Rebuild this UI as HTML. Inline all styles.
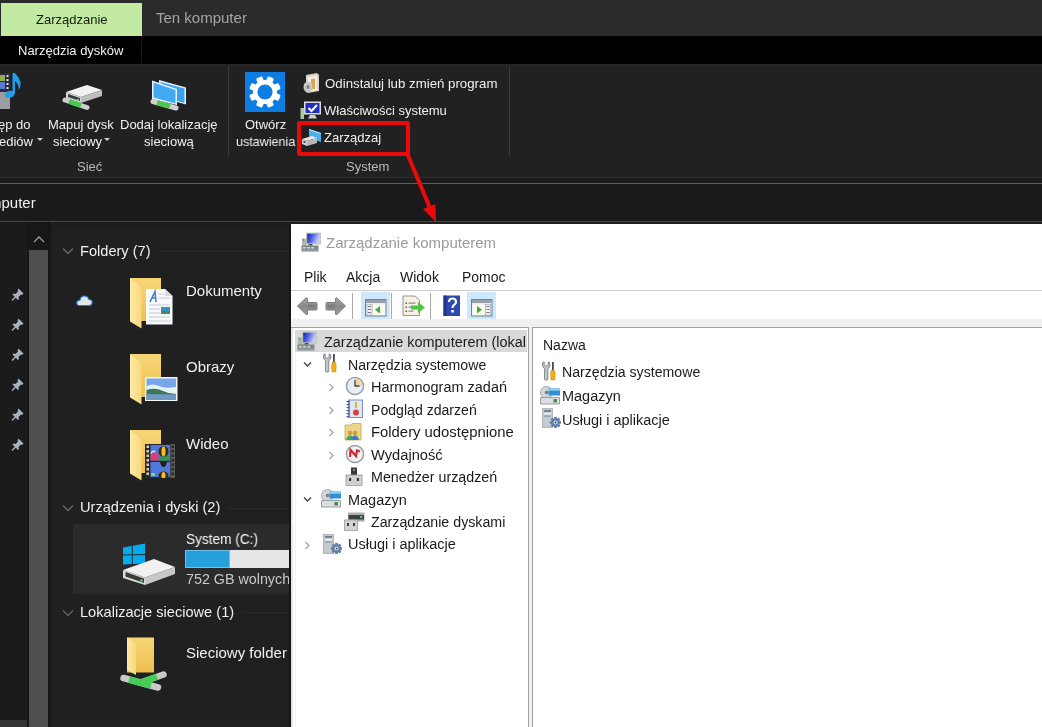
<!DOCTYPE html>
<html><head><meta charset="utf-8">
<style>
*{margin:0;padding:0;box-sizing:border-box}
html,body{width:1042px;height:727px;overflow:hidden;background:#202020;font-family:"Liberation Sans",sans-serif;position:relative}
.a{position:absolute}
.t{position:absolute;will-change:transform;white-space:nowrap;line-height:1}
</style></head><body>
<!-- tab bar -->
<div class="a" style="left:0;top:0;width:1042px;height:36px;background:#2b2b2b"></div>
<div class="a" style="left:1px;top:3px;width:141px;height:33px;background:#c3eaa2"></div>
<div class="t" style="left:36px;top:13px;font-size:13px;color:#121a0e">Zarządzanie</div>
<div class="t" style="left:156px;top:10px;font-size:15px;color:#a6a6a6">Ten komputer</div>
<!-- black band -->
<div class="a" style="left:0;top:36px;width:1042px;height:28px;background:#000"></div>
<div class="a" style="left:141px;top:36px;width:1px;height:27px;background:#1a1a1a"></div>
<div class="t" style="left:18px;top:44px;font-size:13px;color:#f2f2f2">Narzędzia dysków</div>
<!-- ribbon -->
<div class="a" style="left:0;top:64px;width:1042px;height:113px;background:#212121"></div><div class="a" style="left:0;top:64px;width:1042px;height:1px;background:#262626"></div>
<div class="a" style="left:228px;top:66px;width:1px;height:90px;background:#3a3a3a"></div>
<div class="a" style="left:509px;top:66px;width:1px;height:90px;background:#3a3a3a"></div>
<div class="a" style="left:0;top:177px;width:1042px;height:1px;background:#2c2c2c"></div>
<div class="a" style="left:0;top:178px;width:1042px;height:5px;background:#1b1b1b"></div>
<div class="a" style="left:0;top:183px;width:1042px;height:1px;background:#5c5c5c"></div>
<!-- ribbon texts -->
<div class="t" style="left:-2px;top:118px;font-size:13px;color:#f0f0f0">ęp do</div>
<div class="t" style="left:-1px;top:134.5px;font-size:13px;color:#f0f0f0">ediów</div>
<div class="a" style="left:37px;top:137.5px;width:0;height:0;border-left:3.5px solid transparent;border-right:3.5px solid transparent;border-top:3.5px solid #d0d0d0"></div>
<div class="t" style="left:48px;top:118px;font-size:13px;color:#f0f0f0">Mapuj dysk</div>
<div class="t" style="left:53px;top:134.5px;font-size:13px;color:#f0f0f0">sieciowy</div>
<div class="a" style="left:104px;top:137.5px;width:0;height:0;border-left:3.5px solid transparent;border-right:3.5px solid transparent;border-top:3.5px solid #d0d0d0"></div>
<div class="t" style="left:120px;top:118px;font-size:13px;color:#f0f0f0">Dodaj lokalizację</div>
<div class="t" style="left:144px;top:134.5px;font-size:13px;color:#f0f0f0">sieciową</div>
<div class="t" style="left:77px;top:160px;font-size:13px;color:#bababa">Sieć</div>
<div class="t" style="left:245px;top:118px;font-size:13px;color:#f0f0f0">Otwórz</div>
<div class="t" style="left:235.5px;top:134.5px;font-size:13px;color:#f0f0f0;transform:scaleX(0.965);transform-origin:0 0">ustawienia</div>
<div class="t" style="left:325px;top:77px;font-size:13px;color:#f0f0f0;transform:scaleX(1.02);transform-origin:0 0">Odinstaluj lub zmień program</div>
<div class="t" style="left:324px;top:104px;font-size:13px;color:#f0f0f0">Właściwości systemu</div>
<div class="t" style="left:324px;top:131px;font-size:13px;color:#f0f0f0">Zarządzaj</div>
<div class="t" style="left:346px;top:160px;font-size:13px;color:#bababa">System</div>
<!-- ribbon icons -->
<svg class="a" style="left:0;top:68px" width="30" height="44" viewBox="0 0 30 44">
 <rect x="-4" y="22" width="14" height="19" fill="#9c9ea6"/>
 <rect x="-4" y="5" width="14" height="19" fill="#2a2a40"/>
 <rect x="-3" y="7" width="8" height="6" fill="#8fb24a"/>
 <rect x="-3" y="14" width="8" height="7" fill="#5a7ad0"/>
 <rect x="6.5" y="7" width="2" height="2" fill="#e0e0e0"/><rect x="6.5" y="11" width="2" height="2" fill="#e0e0e0"/><rect x="6.5" y="15" width="2" height="2" fill="#e0e0e0"/><rect x="6.5" y="19" width="2" height="2" fill="#e0e0e0"/>
 <path d="M12.5 5 L15 5 Q19 9 20.5 14 Q21 19 18.5 22 Q19.5 17 15 13 L15 25 Q14 30 8 30 Q4 29 5 26 Q7 22 12.5 23 Z" fill="#1f9de6"/>
</svg>
<svg class="a" style="left:60px;top:82px" width="46" height="30" viewBox="0 0 46 30">
 <polygon points="6,10 27,3 42,8 21,15" fill="#f2f2f2"/>
 <polygon points="6,10 21,15 21,21 6,16" fill="#d6d6d6"/>
 <polygon points="21,15 42,8 42,14 21,21" fill="#bdbdbd"/>
 <polygon points="8,12 20,16 20,19 8,15" fill="#3a3a3a"/>
 <circle cx="18" cy="17.5" r="1" fill="#5bd06a"/>
 <line x1="5" y1="18" x2="27" y2="25.5" stroke="#cfcfcf" stroke-width="5" stroke-linecap="round"/>
 <line x1="9" y1="19.4" x2="21" y2="23.5" stroke="#47c94f" stroke-width="5"/>
</svg>
<svg class="a" style="left:148px;top:77px" width="42" height="35" viewBox="0 0 42 35">
 <polygon points="11,3 38,10.5 38,27.5 11,20" fill="#e8f4ff"/>
 <polygon points="12.5,5 36.5,11.5 36.5,26 12.5,19.5" fill="#3aa3ef"/>
 <polygon points="4,3.5 29,12 29,28 4,22" fill="#e8f4ff"/>
 <polygon points="5.5,5.5 27.5,13 27.5,26.5 5.5,20.5" fill="#43aaf2"/>
 <line x1="5" y1="24.5" x2="28" y2="31" stroke="#d8cfd2" stroke-width="5" stroke-linecap="round"/>
 <line x1="9" y1="25.6" x2="22" y2="29.3" stroke="#49c950" stroke-width="5"/>
</svg>
<div class="a" style="left:245px;top:72px;width:40px;height:40px;background:#0d7de3"></div>
<svg class="a" style="left:245px;top:72px" width="40" height="40" viewBox="0 0 40 40">
 <g transform="translate(20,20)" fill="#fff">
  <circle r="12"/><rect x="-3.3" y="-15.8" width="6.6" height="8" rx="1.5" transform="rotate(22.5)"/><rect x="-3.3" y="-15.8" width="6.6" height="8" rx="1.5" transform="rotate(67.5)"/><rect x="-3.3" y="-15.8" width="6.6" height="8" rx="1.5" transform="rotate(112.5)"/><rect x="-3.3" y="-15.8" width="6.6" height="8" rx="1.5" transform="rotate(157.5)"/><rect x="-3.3" y="-15.8" width="6.6" height="8" rx="1.5" transform="rotate(202.5)"/><rect x="-3.3" y="-15.8" width="6.6" height="8" rx="1.5" transform="rotate(247.5)"/><rect x="-3.3" y="-15.8" width="6.6" height="8" rx="1.5" transform="rotate(292.5)"/><rect x="-3.3" y="-15.8" width="6.6" height="8" rx="1.5" transform="rotate(337.5)"/>
  <circle r="7.6" fill="#0d7de3"/>
 </g>
</svg>
<svg class="a" style="left:300px;top:72px" width="22" height="22" viewBox="0 0 22 22">
 <polygon points="6,3 17,1 19,3 19,19 8,21 6,19" fill="#d9d4cc"/>
 <polygon points="8,5 17,3.5 17,18 8,19.5" fill="#f4f0e8"/>
 <polygon points="11,7 15,6.5 15,17 11,17.5" fill="#e0a44a"/>
 <ellipse cx="8" cy="15" rx="4.5" ry="5.5" fill="#c8c8c8"/>
 <ellipse cx="8" cy="15" rx="1.5" ry="2" fill="#808080"/>
</svg>
<svg class="a" style="left:299px;top:100px" width="24" height="21" viewBox="0 0 24 21">
 <rect x="1.5" y="8" width="3.5" height="11" fill="#a9c9a0"/>
 <rect x="5" y="1.5" width="17" height="13" fill="#dcdcdc"/>
 <rect x="6.5" y="3" width="14" height="10" fill="#1f2fc2"/>
 <path d="M9.5 8 L12.5 11 L18 5" fill="none" stroke="#fff" stroke-width="2"/>
 <polygon points="11,15 16,15 18,18.5 9,18.5" fill="#d0d0d0"/>
</svg>
<svg class="a" style="left:300px;top:127px" width="24" height="20" viewBox="0 0 24 20">
 <polygon points="9,2 21,6 21,15 9,11" fill="#4ab0f0"/>
 <polygon points="9,2 21,6 21,7 9,3" fill="#cfe8fa"/>
 <polygon points="2,12 12,9 17,11 7,14" fill="#e6e6e6"/>
 <polygon points="2,12 7,14 7,19 2,17" fill="#cfcfcf"/>
 <polygon points="7,14 17,11 17,16 7,19" fill="#b8b8b8"/>
 <rect x="3.5" y="14" width="2" height="2" fill="#555"/>
</svg>
<!-- address bar -->
<div class="a" style="left:0;top:184px;width:1042px;height:37px;background:#1a1a1a"></div>
<div class="a" style="left:0;top:220.5px;width:1042px;height:1.5px;background:#484848"></div>
<div class="t" style="left:-11px;top:195px;font-size:15px;color:#f0f0f0">mputer</div>
<!-- nav pane -->
<div class="a" style="left:0;top:222px;width:27px;height:505px;background:#1b1b1b"></div>
<div class="a" style="left:0;top:720px;width:27px;height:7px;background:#333"></div>
<div class="a" style="left:27px;top:222px;width:21px;height:505px;background:#171717"></div>
<div class="a" style="left:29px;top:250px;width:19px;height:477px;background:#4f4f4f"></div>
<div class="a" style="left:48px;top:222px;width:3px;height:505px;background:#151515"></div>
<div class="a" style="left:51px;top:224px;width:2px;height:503px;background:#1d1d1d"></div>
<div class="a" style="left:53px;top:222px;width:240px;height:7px;background:#1c1c1c"></div>
<!-- content -->
<svg class="a" style="left:62px;top:247px" width="12" height="8"><path d="M1 1.5 L6 6.5 L11 1.5" fill="none" stroke="#646464" stroke-width="1.4"/></svg>
<div class="t" style="left:80px;top:244px;font-size:14.6px;color:#f0f0f0">Foldery (7)</div>
<div class="a" style="left:160px;top:251px;width:130px;height:1px;background:#2a2a2a"></div>
<div class="t" style="left:186px;top:283px;font-size:15px;color:#f0f0f0">Dokumenty</div>
<div class="t" style="left:186px;top:359px;font-size:15px;color:#f0f0f0">Obrazy</div>
<div class="t" style="left:186px;top:435.5px;font-size:15px;color:#f0f0f0">Wideo</div>
<svg class="a" style="left:62px;top:504px" width="12" height="8"><path d="M1 1.5 L6 6.5 L11 1.5" fill="none" stroke="#646464" stroke-width="1.4"/></svg>
<div class="t" style="left:80px;top:500px;font-size:14.6px;color:#f0f0f0">Urządzenia i dyski (2)</div>
<div class="a" style="left:228px;top:508px;width:62px;height:1px;background:#2a2a2a"></div>
<div class="a" style="left:73px;top:524px;width:217px;height:70px;background:#2b2b2b"></div>
<div class="t" style="left:186px;top:532px;font-size:14px;color:#fafafa;transform:scaleX(0.975);transform-origin:0 0">System (C:)</div>
<div class="a" style="left:185px;top:550px;width:105px;height:18px;background:#e6e6e6"></div>
<div class="a" style="left:185px;top:550px;width:44.5px;height:18px;background:#26a0da;border:1px solid #6fc0ea"></div>
<div class="t" style="left:186px;top:572.3px;font-size:14.3px;color:#c9c9c9">752 GB wolnych</div>
<svg class="a" style="left:62px;top:609px" width="12" height="8"><path d="M1 1.5 L6 6.5 L11 1.5" fill="none" stroke="#646464" stroke-width="1.4"/></svg>
<div class="t" style="left:80px;top:605px;font-size:14.6px;color:#f0f0f0">Lokalizacje sieciowe (1)</div>
<div class="a" style="left:243px;top:612px;width:47px;height:1px;background:#2a2a2a"></div>
<div class="t" style="left:186px;top:645px;font-size:15px;color:#f0f0f0">Sieciowy folder</div>
<!-- content icons -->
<svg class="a" style="left:11px;top:287px" width="14" height="170" viewBox="0 0 14 170">
 <g id="pin"><path d="M7.5 1.5 L12.5 6.5 L11 8 L10 7.5 L7.5 10 L8 12 L7 13 L1.5 7.5 L2.5 6.5 L4.5 7 L7 4.5 L6.5 3.5 Z" fill="#a9b1bb"/><line x1="4.5" y1="10" x2="1" y2="13.5" stroke="#a9b1bb" stroke-width="1.5"/></g>
 <use href="#pin" y="30"/><use href="#pin" y="60"/><use href="#pin" y="90"/><use href="#pin" y="120"/><use href="#pin" y="150"/>
</svg>
<svg class="a" style="left:32px;top:234px" width="14" height="10" viewBox="0 0 14 10"><path d="M2 8 L7 3 L12 8" fill="none" stroke="#9a9a9a" stroke-width="1.3"/></svg>
<svg class="a" style="left:76px;top:294px" width="17" height="13" viewBox="0 0 17 13">
 <path d="M3.5 11.5 Q0.5 11.5 0.8 8.5 Q1.2 6 4 6.2 Q4.5 2 8.5 2 Q12 2 12.8 5.5 Q16.2 5.5 16.2 8.6 Q16 11.5 13 11.5 Z" fill="#e4e6ea" stroke="#2a78d0" stroke-width="1.1"/>
</svg>
<svg width="0" height="0" style="position:absolute">
 <defs>
  <linearGradient id="fb" x1="0" y1="0" x2="0" y2="1"><stop offset="0" stop-color="#f7d677"/><stop offset="1" stop-color="#eebf4f"/></linearGradient>
  <linearGradient id="ff" x1="0" y1="0" x2="1" y2="0"><stop offset="0" stop-color="#fde9a6"/><stop offset="1" stop-color="#f8d97d"/></linearGradient>
  <symbol id="fold" viewBox="0 0 32 51"><rect x="0" y="0" width="31" height="43" fill="url(#fb)"/><polygon points="0,0 11.5,9 11.5,50.5 0,43.5" fill="url(#ff)"/></symbol>
 </defs>
</svg>
<svg class="a" style="left:130px;top:278px" width="32" height="51"><use href="#fold"/></svg>
<svg class="a" style="left:146px;top:289px" width="27" height="36" viewBox="0 0 27 36">
 <polygon points="0,0 19,0 26.5,7 26.5,35.5 0,35.5" fill="#f8f9fb"/>
 <polygon points="19,0 26.5,7 19,7" fill="#d9dde3"/>
 <path d="M4 13 L9 2.5 L10 13 M6 9 L10 9" fill="none" stroke="#3d7fd0" stroke-width="1.6"/>
 <g stroke="#c5ccd6" stroke-width="1"><line x1="12" y1="5" x2="18" y2="5"/><line x1="12" y1="9" x2="24" y2="9"/><line x1="3" y1="16" x2="24" y2="16"/><line x1="3" y1="20" x2="14" y2="20"/><line x1="3" y1="24" x2="14" y2="24"/><line x1="3" y1="28" x2="24" y2="28"/><line x1="3" y1="32" x2="24" y2="32"/></g>
 <rect x="15" y="18" width="9" height="7" fill="#3c8fc4"/><rect x="15" y="22" width="9" height="3" fill="#4d8a63"/>
</svg>
<svg class="a" style="left:130px;top:354px" width="32" height="51"><use href="#fold"/></svg>
<svg class="a" style="left:145px;top:376.5px" width="32.5" height="24.5" viewBox="0 0 32.5 24.5">
 <rect x="0" y="0" width="32.5" height="24.5" fill="#f3f6f9"/>
 <rect x="1.5" y="1.5" width="29.5" height="21.5" fill="#78a6ea"/>
 <path d="M1.5 9 Q8 6 14 9 Q20 12 31 10 L31 23 L1.5 23 Z" fill="#e4f2f6"/>
 <path d="M1.5 13 Q10 10 18 14 Q24 17 31 17 L31 23 L1.5 23 Z" fill="#3d7658"/>
 <path d="M1.5 17 L31 17.5 L31 23 L1.5 23 Z" fill="#7098c4"/>
</svg>
<svg class="a" style="left:130px;top:430px" width="32" height="51"><use href="#fold"/></svg>
<svg class="a" style="left:144.5px;top:443.5px" width="30" height="34" viewBox="0 0 30 34">
 <rect x="0" y="0" width="30" height="34" fill="#2a2a2a"/>
 <rect x="25.5" y="0" width="4.5" height="34" fill="#5a5a5a"/>
 <g fill="#d8d0b0"><rect x="1.5" y="1.5" width="2.5" height="2.5"/><rect x="1.5" y="6" width="2.5" height="2.5"/><rect x="1.5" y="10.5" width="2.5" height="2.5"/><rect x="1.5" y="15" width="2.5" height="2.5"/><rect x="1.5" y="19.5" width="2.5" height="2.5"/><rect x="1.5" y="24" width="2.5" height="2.5"/><rect x="1.5" y="28.5" width="2.5" height="2.5"/></g>
 <g fill="#2a2a2a"><rect x="26.5" y="1.5" width="2.5" height="2.5"/><rect x="26.5" y="6" width="2.5" height="2.5"/><rect x="26.5" y="10.5" width="2.5" height="2.5"/><rect x="26.5" y="15" width="2.5" height="2.5"/><rect x="26.5" y="19.5" width="2.5" height="2.5"/><rect x="26.5" y="24" width="2.5" height="2.5"/><rect x="26.5" y="28.5" width="2.5" height="2.5"/></g>
 <rect x="5.5" y="1" width="19.5" height="15.5" fill="#4c78e0"/>
 <rect x="5.5" y="18" width="19.5" height="15" fill="#4c78e0"/>
 <path d="M5.5 16.5 L5.5 11 Q8 7 10 9 Q12 7 13.5 11 L13.5 16.5 Z" fill="#d8406a"/>
 <path d="M6 9.5 Q8 6 10 8" fill="none" stroke="#e8f0f0" stroke-width="1.5"/>
 <ellipse cx="18.5" cy="7.5" rx="5" ry="5.5" fill="#3a2a10"/>
 <ellipse cx="18.5" cy="7.5" rx="2" ry="5" fill="#f0c020"/>
 <path d="M13.5 16.5 Q16 11 20 12.5 Q24 11 25 14 L25 16.5 Z" fill="#2a9a4a"/>
 <path d="M15 18 L22 18 Q21 23 18.5 23 Q16 23 15 18 Z" fill="#2a1a10"/>
 <ellipse cx="18.5" cy="31.5" rx="5" ry="4" fill="#3a2a10"/>
 <ellipse cx="18.5" cy="31.5" rx="2" ry="3.5" fill="#f0c020"/>
 <rect x="6" y="29" width="4" height="3" fill="#8ad070"/>
</svg>
<svg class="a" style="left:120px;top:542px" width="58" height="45" viewBox="0 0 58 45">
 <polygon points="3,5.5 25,1.5 25,21.5 3,22.5" fill="#00aef0"/>
 <line x1="12.3" y1="3.5" x2="12.3" y2="22.5" stroke="#2b2b2b" stroke-width="1"/>
 <line x1="3" y1="13" x2="25" y2="12.5" stroke="#2b2b2b" stroke-width="1"/>
 <polygon points="3,28 34,17 55,25 25,35.5" fill="#f1f1f1"/>
 <polygon points="3,28 25,35.5 25,43 3,36" fill="#dadada"/>
 <polygon points="25,35.5 55,25 55,32 25,43" fill="#c8c8c8"/>
 <polygon points="5.5,30 24,36.5 24,41 5.5,34.5" fill="#3a3a3a"/>
 <circle cx="21.5" cy="38.5" r="1.2" fill="#62d06e"/>
</svg>
<svg class="a" style="left:115px;top:632px" width="55" height="62" viewBox="0 0 55 62">
 <rect x="12" y="5.5" width="27" height="35" fill="url(#fb)"/>
 <polygon points="12,5.5 21,12 21,43 12,38" fill="url(#ff)"/>
 <line x1="8.5" y1="46" x2="43" y2="55.5" stroke="#c9c9c9" stroke-width="6.5" stroke-linecap="round"/>
 <line x1="26" y1="50.5" x2="48.5" y2="42.5" stroke="#c9c9c9" stroke-width="6.5" stroke-linecap="round"/>
 <line x1="14" y1="47.5" x2="36" y2="53.6" stroke="#45cc55" stroke-width="6.5"/>
 <line x1="27" y1="50" x2="42" y2="44.7" stroke="#45cc55" stroke-width="6.5"/>
</svg>
<!-- dialog -->
<div class="a" style="left:289px;top:224px;width:2px;height:503px;background:#151515"></div>
<div class="a" style="left:291px;top:224px;width:751px;height:503px;background:#fff"></div>
<div class="t" style="left:326px;top:235px;font-size:15px;color:#9a9a9a">Zarządzanie komputerem</div>
<div class="t" style="left:304px;top:270px;font-size:14px;color:#1a1a1a">Plik</div>
<div class="t" style="left:346px;top:270px;font-size:14px;color:#1a1a1a">Akcja</div>
<div class="t" style="left:400px;top:270px;font-size:14px;color:#1a1a1a">Widok</div>
<div class="t" style="left:462px;top:270px;font-size:14px;color:#1a1a1a">Pomoc</div>
<div class="a" style="left:291px;top:290px;width:751px;height:1px;background:#cdcdcd"></div>
<div class="a" style="left:291px;top:319px;width:751px;height:408px;background:#f0f0f0"></div>
<div class="a" style="left:291px;top:327px;width:238px;height:400px;background:#fff;border:1px solid #a0a0a0;border-bottom:0;border-left:0"></div><div class="a" style="left:291px;top:328px;width:1.5px;height:399px;background:#e6e6e6"></div><div class="a" style="left:294.5px;top:352px;width:1px;height:375px;background:#f2f2f2"></div>
<div class="a" style="left:532px;top:327px;width:510px;height:400px;background:#fff;border:1px solid #a0a0a0;border-right:0;border-bottom:0"></div>
<div class="a" style="left:295px;top:330px;width:232px;height:21.5px;background:#d9d9d9"></div>
<div id="tree" style="position:absolute;left:295px;top:328px;width:232px;height:399px;overflow:hidden">
<div class="t" style="left:28.5px;top:7px;font-size:14px;color:#1a1a1a;transform:scaleX(1.0300);transform-origin:0 0">Zarządzanie komputerem (lokalny)</div>
<div class="t" style="left:53px;top:29.5px;font-size:14px;color:#1a1a1a;transform:scaleX(1.0095);transform-origin:0 0">Narzędzia systemowe</div>
<div class="t" style="left:76px;top:52px;font-size:14px;color:#1a1a1a;transform:scaleX(1.0342);transform-origin:0 0">Harmonogram zadań</div>
<div class="t" style="left:76px;top:74.5px;font-size:14px;color:#1a1a1a;transform:scaleX(1.0067);transform-origin:0 0">Podgląd zdarzeń</div>
<div class="t" style="left:76px;top:97px;font-size:14px;color:#1a1a1a;transform:scaleX(1.0601);transform-origin:0 0">Foldery udostępnione</div>
<div class="t" style="left:76px;top:119.5px;font-size:14px;color:#1a1a1a;transform:scaleX(1.0482);transform-origin:0 0">Wydajność</div>
<div class="t" style="left:76px;top:142px;font-size:14px;color:#1a1a1a;transform:scaleX(1.0202);transform-origin:0 0">Menedżer urządzeń</div>
<div class="t" style="left:53px;top:164.5px;font-size:14px;color:#1a1a1a;transform:scaleX(1.0335);transform-origin:0 0">Magazyn</div>
<div class="t" style="left:76px;top:187px;font-size:14px;color:#1a1a1a;transform:scaleX(1.0159);transform-origin:0 0">Zarządzanie dyskami</div>
<div class="t" style="left:53px;top:208.5px;font-size:14px;color:#1a1a1a;transform:scaleX(1.0345);transform-origin:0 0">Usługi i aplikacje</div>
</div>
<div class="t" style="left:542.5px;top:338px;font-size:14px;color:#1a1a1a">Nazwa</div>
<div class="t" style="left:562px;top:364.5px;font-size:14px;color:#1a1a1a;transform:scaleX(1.0095);transform-origin:0 0">Narzędzia systemowe</div>
<div class="t" style="left:562px;top:389px;font-size:14px;color:#1a1a1a;transform:scaleX(1.0335);transform-origin:0 0">Magazyn</div>
<div class="t" style="left:562px;top:412.5px;font-size:14px;color:#1a1a1a;transform:scaleX(1.0345);transform-origin:0 0">Usługi i aplikacje</div>
<!-- dialog icons -->
<svg width="0" height="0" style="position:absolute">
 <defs>
  <symbol id="compmgmt" viewBox="0 0 20 20">
   <linearGradient id="scr" x1="0" y1="0" x2="1" y2="0.3"><stop offset="0" stop-color="#1020c0"/><stop offset="0.45" stop-color="#5060e0"/><stop offset="1" stop-color="#c8d0f8"/></linearGradient>
   <rect x="5" y="0.5" width="15" height="12" fill="#c4c6b8"/>
   <rect x="6.2" y="1.7" width="12.6" height="9.6" fill="url(#scr)"/>
   <rect x="1" y="6.5" width="4.5" height="8" fill="#b0b8a8"/>
   <rect x="2" y="7.5" width="1" height="1" fill="#404040"/>
   <path d="M6 13.5 Q8 11.5 11 12 L12 13.5 Z" fill="#303848"/>
   <rect x="0.5" y="13.5" width="17" height="6" fill="#7c8488"/>
   <g fill="#d0d4d6"><rect x="1.8" y="15" width="3" height="1.6"/><rect x="6" y="15" width="3" height="1.6"/><rect x="10.2" y="15" width="3" height="1.6"/></g>
   <rect x="1" y="17.5" width="16" height="1.3" fill="#9aa2a6"/>
  </symbol>
  <symbol id="tools" viewBox="0 0 16 20">
   <path d="M1.8 1.5 Q0.5 5 2.8 7.2 L3.6 7.8 L3.6 18.5 Q5.2 19.8 6.8 18.5 L6.8 7.8 L7.6 7.2 Q9.8 5 8.5 1.5 L7.2 1 L7.2 4.2 L6 5 L4.4 5 L3.2 4.2 L3.2 1 Z" fill="#c4c8cc" stroke="#6a7078" stroke-width="0.8"/>
   <rect x="11" y="1" width="1.8" height="8.5" fill="#4a4a4a"/>
   <path d="M10.2 9.5 L13.6 9.5 L14.2 12.5 L13.8 19 L10 19 L9.6 12.5 Z" fill="#f2b010" stroke="#b98008" stroke-width="0.5"/>
  </symbol>
  <symbol id="storage" viewBox="0 0 22 20">
   <circle cx="7.5" cy="7.5" r="6.5" fill="#a8acb0"/>
   <circle cx="7.5" cy="7.5" r="5.5" fill="#d4d7da"/>
   <circle cx="7.5" cy="7.5" r="1.8" fill="#7a7e82"/>
   <rect x="9.5" y="3.5" width="11.5" height="7" fill="#2f8fd0"/>
   <rect x="9.5" y="3.5" width="11.5" height="2.2" fill="#8fd0f5"/>
   <rect x="1" y="12" width="20" height="7.5" rx="1.2" fill="#9a9fa4"/>
   <rect x="2" y="13" width="18" height="5.5" rx="0.8" fill="#dcdfe2"/>
   <rect x="14.5" y="14" width="3.5" height="3.5" fill="#4a8a50"/>
  </symbol>
  <symbol id="services" viewBox="0 0 20 20">
   <rect x="1.5" y="0.5" width="10" height="19" fill="#c3cbd0"/>
   <rect x="1.5" y="0.5" width="10" height="19" fill="none" stroke="#9aa4ac" stroke-width="0.7"/>
   <rect x="3" y="2" width="7" height="1.8" fill="#6f7e8c"/>
   <rect x="3" y="5" width="7" height="1.5" fill="#eef2f4"/>
   <rect x="3" y="7.5" width="7" height="1.2" fill="#8a98a4"/>
   <g transform="translate(14.5,14.5)" fill="#5f7ea6"><rect x="-1.3" y="-5.6" width="2.6" height="2.5" transform="rotate(0)"/><rect x="-1.3" y="-5.6" width="2.6" height="2.5" transform="rotate(45)"/><rect x="-1.3" y="-5.6" width="2.6" height="2.5" transform="rotate(90)"/><rect x="-1.3" y="-5.6" width="2.6" height="2.5" transform="rotate(135)"/><rect x="-1.3" y="-5.6" width="2.6" height="2.5" transform="rotate(180)"/><rect x="-1.3" y="-5.6" width="2.6" height="2.5" transform="rotate(225)"/><rect x="-1.3" y="-5.6" width="2.6" height="2.5" transform="rotate(270)"/><rect x="-1.3" y="-5.6" width="2.6" height="2.5" transform="rotate(315)"/><circle r="4.3"/><circle r="2" fill="#dfe8f2"/><circle r="0.9" fill="#2b3f66"/></g>
  </symbol>
 </defs>
</svg>
<svg class="a" style="left:301px;top:232px" width="20" height="20"><use href="#compmgmt"/></svg>
<!-- toolbar -->
<svg class="a" style="left:296px;top:296px" width="22" height="20" viewBox="0 0 22 20"><defs><linearGradient id="arr" x1="0" y1="0" x2="0" y2="1"><stop offset="0" stop-color="#a8a8a8"/><stop offset="0.5" stop-color="#8a8a8a"/><stop offset="1" stop-color="#9a9a9a"/></linearGradient></defs><path d="M1.5 10 L10.5 1.5 L11.5 2.5 L11.5 6.5 L20 6.5 Q21 6.5 21 7.5 L21 13 Q21 14 20 14 L11.5 14 L11.5 18 L10.5 19 Z" fill="url(#arr)" stroke="#747474" stroke-width="0.9" stroke-linejoin="round"/><rect x="12" y="8.5" width="7" height="3" fill="#6e6e6e" opacity="0.5"/></svg>
<svg class="a" style="left:325px;top:296px" width="22" height="20" viewBox="0 0 22 20"><path d="M20.5 10 L11.5 1.5 L10.5 2.5 L10.5 6.5 L2 6.5 Q1 6.5 1 7.5 L1 13 Q1 14 2 14 L10.5 14 L10.5 18 L11.5 19 Z" fill="url(#arr)" stroke="#747474" stroke-width="0.9" stroke-linejoin="round"/><rect x="3" y="8.5" width="7" height="3" fill="#6e6e6e" opacity="0.5"/></svg>
<div class="a" style="left:352px;top:293px;width:1px;height:26px;background:#a8a8a8"></div>
<div class="a" style="left:361px;top:292px;width:29px;height:27px;background:#cce8ff"></div>
<svg class="a" style="left:365px;top:299px" width="22" height="18" viewBox="0 0 22 18">
 <rect x="0.5" y="0.5" width="20.5" height="16.5" fill="#e8e8ee" stroke="#7a7f88"/>
 <rect x="1" y="1" width="19.5" height="3" fill="#9aa0aa"/>
 <rect x="2" y="5.5" width="5" height="10.5" fill="#f4f4f4" stroke="#9aa0aa" stroke-width="0.6"/>
 <g fill="#6a7080"><rect x="3" y="7" width="3" height="1"/><rect x="3" y="10" width="3" height="1"/><rect x="3" y="13" width="3" height="1"/></g>
 <rect x="8" y="5.5" width="12" height="10.5" fill="#fafff0"/>
 <polygon points="10,10.7 15,7 15,14.4" fill="#3cab3c"/>
</svg>
<div class="a" style="left:391px;top:293px;width:1px;height:26px;background:#a8a8a8"></div>
<svg class="a" style="left:402px;top:295px" width="24" height="22" viewBox="0 0 24 22">
 <polygon points="1,1 13,1 17.5,5 17.5,20.5 1,20.5" fill="#f6f1e2" stroke="#8a8a8a" stroke-width="0.9"/>
 <g fill="#5a5a5a"><rect x="3.5" y="7.5" width="1.5" height="1.5"/><rect x="3.5" y="11.5" width="1.5" height="1.5"/><rect x="3.5" y="15.5" width="1.5" height="1.5"/></g>
 <g fill="#8a8a8a"><rect x="6.5" y="7.5" width="7" height="1.2"/><rect x="6.5" y="11.5" width="7" height="1.2"/><rect x="6.5" y="15.5" width="5" height="1.2"/></g>
 <path d="M9 10.5 L16 10.5 L16 7 L23 12.5 L16 18 L16 14.5 L9 14.5 Z" fill="#52c24a"/>
</svg>
<div class="a" style="left:430px;top:293px;width:1px;height:26px;background:#a8a8a8"></div>
<svg class="a" style="left:443px;top:295px" width="18" height="22" viewBox="0 0 18 22">
 <rect x="0.5" y="0.5" width="16.5" height="20.5" fill="#2d48ad"/>
 <rect x="0.5" y="0.5" width="3" height="20.5" fill="#1e3590"/>
 <path d="M6 7 Q6 3.5 9.5 3.5 Q13 3.5 13 7 Q13 9 11 10 Q9.5 11 9.5 13" fill="none" stroke="#fff" stroke-width="2.2"/>
 <rect x="8.3" y="15" width="2.5" height="2.5" fill="#fff"/>
</svg>
<div class="a" style="left:467px;top:292px;width:29px;height:27px;background:#cce8ff"></div>
<svg class="a" style="left:471px;top:299px" width="22" height="18" viewBox="0 0 22 18">
 <rect x="0.5" y="0.5" width="20.5" height="16.5" fill="#e8e8ee" stroke="#7a7f88"/>
 <rect x="1" y="1" width="19.5" height="3" fill="#9aa0aa"/>
 <rect x="14.5" y="5.5" width="5" height="10.5" fill="#f4f4f4" stroke="#9aa0aa" stroke-width="0.6"/>
 <g fill="#6a7080"><rect x="15.5" y="7" width="3" height="1"/><rect x="15.5" y="10" width="3" height="1"/><rect x="15.5" y="13" width="3" height="1"/></g>
 <rect x="1.5" y="5.5" width="12" height="10.5" fill="#fafff0"/>
 <polygon points="11,10.7 6,7 6,14.4" fill="#3cab3c"/>
</svg>
<!-- tree icons -->
<svg class="a" style="left:297px;top:331px" width="20" height="20"><use href="#compmgmt"/></svg>
<svg class="a" style="left:303px;top:361px" width="9" height="7" viewBox="0 0 9 7"><path d="M1 1.5 L4.5 5 L8 1.5" fill="none" stroke="#404040" stroke-width="1.4"/></svg>
<svg class="a" style="left:322px;top:353px" width="16" height="20"><use href="#tools"/></svg>
<svg class="a" style="left:328px;top:383px" width="7" height="9" viewBox="0 0 7 9"><path d="M1.5 1 L5 4.5 L1.5 8" fill="none" stroke="#a6a6a6" stroke-width="1.3"/></svg>
<svg class="a" style="left:345px;top:376px" width="20" height="20" viewBox="0 0 20 20">
 <circle cx="10" cy="10" r="9.3" fill="#9aa0a6"/><circle cx="10" cy="10" r="7.8" fill="#e6eef6"/>
 <path d="M10 2.5 A7.5 7.5 0 0 1 17.5 10 L10 10 Z" fill="#f3d7a8"/>
 <path d="M10 4 L10 10 L14.5 10" fill="none" stroke="#444" stroke-width="1.3"/>
</svg>
<svg class="a" style="left:328px;top:405.5px" width="7" height="9" viewBox="0 0 7 9"><path d="M1.5 1 L5 4.5 L1.5 8" fill="none" stroke="#a6a6a6" stroke-width="1.3"/></svg>
<svg class="a" style="left:345px;top:399px" width="20" height="20" viewBox="0 0 20 20">
 <rect x="3" y="0.5" width="15" height="18.5" fill="#7d8fb8"/>
 <rect x="5" y="1.5" width="12" height="16.5" fill="#dfe7f5"/>
 <g fill="#4a5f95"><rect x="1.5" y="2" width="3" height="1.2"/><rect x="1.5" y="5" width="3" height="1.2"/><rect x="1.5" y="8" width="3" height="1.2"/><rect x="1.5" y="11" width="3" height="1.2"/><rect x="1.5" y="14" width="3" height="1.2"/><rect x="1.5" y="17" width="3" height="1.2"/></g>
 <rect x="10" y="3" width="2" height="6" fill="#e8b818"/>
 <circle cx="11" cy="13.5" r="3" fill="#d84048"/>
</svg>
<svg class="a" style="left:328px;top:428px" width="7" height="9" viewBox="0 0 7 9"><path d="M1.5 1 L5 4.5 L1.5 8" fill="none" stroke="#a6a6a6" stroke-width="1.3"/></svg>
<svg class="a" style="left:344px;top:422px" width="19" height="19" viewBox="0 0 19 19">
 <polygon points="1,3 7,3 8,1.5 17,1.5 17,18 1,18" fill="#ecd48a" stroke="#c9a850" stroke-width="0.8"/>
 <circle cx="6" cy="11" r="2.3" fill="#c8a040"/><circle cx="11" cy="11" r="2.3" fill="#c8a040"/>
 <path d="M2 18 Q3 13.5 6 13.5 Q9 13.5 10 18 Z" fill="#38a868"/>
 <path d="M7 18 Q8 13.5 11 13.5 Q14 13.5 15 18 Z" fill="#3a7cc8"/>
</svg>
<svg class="a" style="left:328px;top:450.5px" width="7" height="9" viewBox="0 0 7 9"><path d="M1.5 1 L5 4.5 L1.5 8" fill="none" stroke="#a6a6a6" stroke-width="1.3"/></svg>
<svg class="a" style="left:345px;top:443.5px" width="20" height="20" viewBox="0 0 20 20">
 <circle cx="10" cy="10" r="9.3" fill="#9ca0a4"/><circle cx="10" cy="10" r="7.8" fill="#f2f2f2"/>
 <path d="M5 13 L5.5 6 L11 12 L12 6.5 L15 7.5" fill="none" stroke="#d8262e" stroke-width="2.2"/>
</svg>
<svg class="a" style="left:345px;top:466.5px" width="18" height="19" viewBox="0 0 18 19">
 <rect x="6" y="0.5" width="6" height="8" fill="#3a3a3a"/>
 <rect x="8" y="2" width="2" height="2" fill="#8a8a8a"/>
 <rect x="1" y="8" width="16" height="10.5" fill="#d0d0d0" stroke="#9a9a9a" stroke-width="0.8"/>
 <rect x="4" y="11" width="2.2" height="3" fill="#3a3a3a"/><rect x="11.8" y="11" width="2.2" height="3" fill="#3a3a3a"/>
</svg>
<svg class="a" style="left:303px;top:495.5px" width="9" height="7" viewBox="0 0 9 7"><path d="M1 1.5 L4.5 5 L8 1.5" fill="none" stroke="#404040" stroke-width="1.4"/></svg>
<svg class="a" style="left:320px;top:488px" width="22" height="20"><use href="#storage"/></svg>
<svg class="a" style="left:344px;top:512px" width="21" height="19" viewBox="0 0 21 19">
 <rect x="4" y="0.5" width="16.5" height="9" fill="#a9aeb2"/>
 <rect x="4.5" y="3" width="15.5" height="4.5" fill="#3a4040"/>
 <rect x="16" y="4" width="2.5" height="2" fill="#5ec060"/>
 <rect x="0.5" y="8" width="13" height="10.5" fill="#d3d3d3" stroke="#9a9a9a" stroke-width="0.8"/>
 <rect x="3" y="11" width="2" height="3" fill="#3a3a3a"/><rect x="9" y="11" width="2" height="3" fill="#3a3a3a"/>
</svg>
<svg class="a" style="left:304px;top:540.5px" width="7" height="9" viewBox="0 0 7 9"><path d="M1.5 1 L5 4.5 L1.5 8" fill="none" stroke="#a6a6a6" stroke-width="1.3"/></svg>
<svg class="a" style="left:322px;top:533.5px" width="20" height="20"><use href="#services"/></svg>
<!-- right panel icons -->
<svg class="a" style="left:541px;top:360.5px" width="16" height="20"><use href="#tools"/></svg>
<svg class="a" style="left:539px;top:384.5px" width="22" height="20"><use href="#storage"/></svg>
<svg class="a" style="left:541px;top:408px" width="20" height="20"><use href="#services"/></svg>
<!-- red box and arrow -->
<div class="a" style="left:297px;top:121.3px;width:113px;height:34.3px;border:4.4px solid #ea0a0a;border-radius:2.5px"></div>
<svg class="a" style="left:400px;top:150px" width="45" height="75" viewBox="0 0 45 75">
 <line x1="7" y1="3" x2="30" y2="58" stroke="#ea0a0a" stroke-width="4"/>
 <polygon points="23,59 35.5,54 36,72" fill="#ea0a0a"/>
</svg>
</body></html>
